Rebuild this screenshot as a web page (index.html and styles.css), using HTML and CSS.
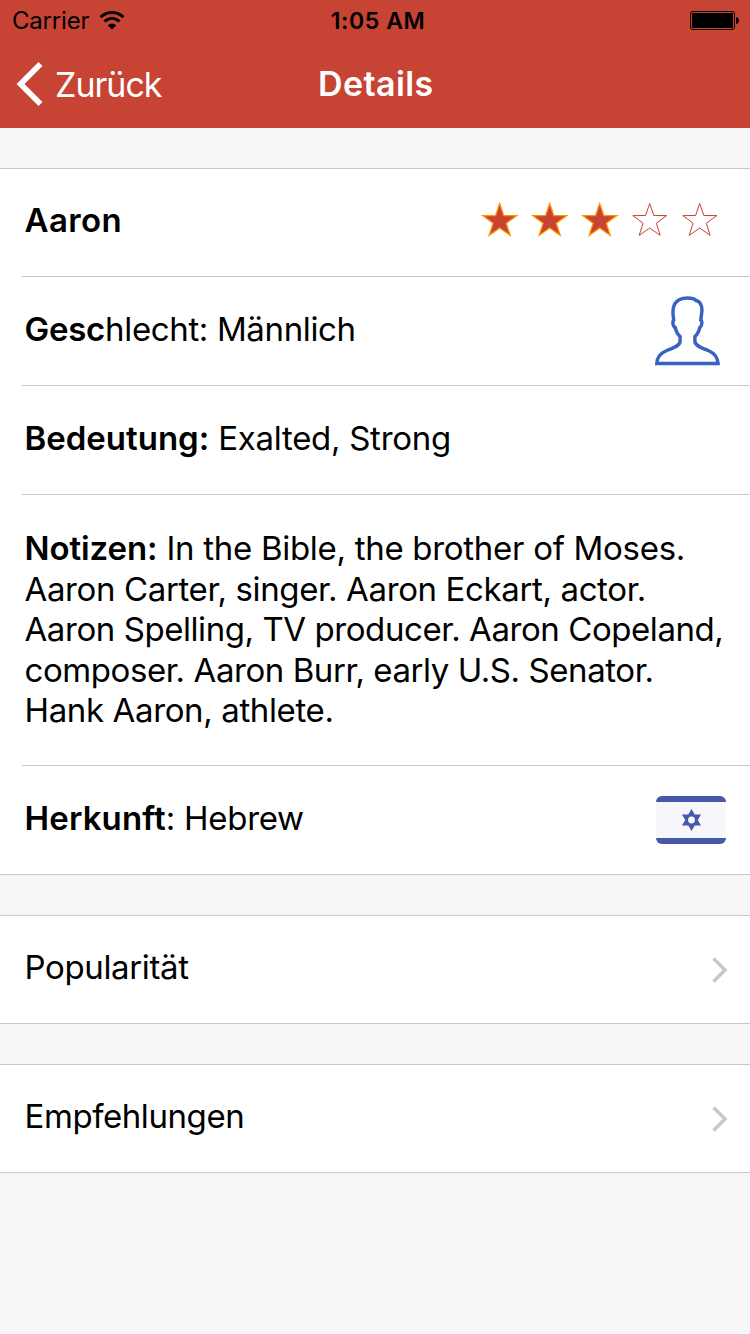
FILE: index.html
```html
<!DOCTYPE html>
<html lang="de">
<head>
<meta charset="utf-8">
<title>Details</title>
<link rel="stylesheet" href="styles.css">
</head>
<body>
<header class="header">
  <div class="status">
    <div class="status-left">
      <span class="carrier">Carrier</span>
      <svg class="wifi" width="26" height="20" viewBox="0 0 26 20">
        <path d="M1.600 6.200A16 16 0 0 1 24.400 6.200" fill="none" stroke="#000" stroke-width="2.900"/>
        <path d="M5.500 10.500A10.600 10.600 0 0 1 20.500 10.500" fill="none" stroke="#000" stroke-width="2.800"/>
        <path d="M13 18.600L8.800 14.300A6 6 0 0 1 17.200 14.300Z"/>
      </svg>
    </div>
    <span class="clock">1:05 AM</span>
    <svg class="battery" width="50" height="20" viewBox="0 0 50 20">
      <rect x=".5" y=".5" width="44" height="18" rx="2.5" fill="none" stroke="#000"/>
      <rect x="2" y="2" width="41" height="15" rx="1"/>
      <path d="M46 6q3 .5 3 3.500t-3 3.500z"/>
    </svg>
  </div>
  <nav class="nav">
    <div class="back">
      <svg class="back-icon" width="28" height="44" viewBox="0 0 28 44"><path d="M24.500 2L4.500 22L24.500 42" fill="none" stroke="#fff" stroke-width="5.600"/></svg>
      <span class="back-label">Zurück</span>
    </div>
    <h1 class="title">Details</h1>
  </nav>
</header>
<main>
  <section class="group">
    <div class="row first">
      <span class="text name"><b>Aaron</b></span>
      <svg class="stars" width="240" height="36" viewBox="0 0 240 36">
        <defs><path id="star" d="M19.700 1.500L23.800 13.500L36.800 13.600L26.300 21.200L30.200 33.400L19.700 26L9.200 33.400L13.100 21.200L2.800 13.600L15.600 13.500Z"/></defs>
        <g class="star-on"><use href="#star"/><use href="#star" x="50"/><use href="#star" x="100"/></g>
        <g class="star-off"><use href="#star" x="150"/><use href="#star" x="200"/></g>
      </svg>
    </div>
    <div class="row">
      <span class="text"><b class="gender-label">Gesc</b><span class="gender">hlecht: Männlich</span></span>
      <svg class="person" width="66" height="70" viewBox="0 0 67 70" preserveAspectRatio="none"><path d="M1.800 67.500C2 61 6 57 12 54.500C19 51.500 25.500 50 25.500 45V40.500C23 38.500 21.500 35.500 20.500 31.500C18 30.500 17.500 25 19 24C18 18 17.500 12 20 8C23 3 28 2 33 2C37 2 40 2.500 41.500 4.500C45 5 48.500 9 47.500 16L46.500 24C48.500 25 47.500 30.500 45.500 31.500C44.500 35.500 43 38.500 40.500 40.500V45C40.500 50 47 51.500 54 54.500C60 57 63.500 61 64 67.500Z"/></svg>
    </div>
    <div class="row">
      <span class="text"><b>Bedeutung:</b><span class="meaning"> Exalted, Strong</span></span>
    </div>
    <div class="row notes">
      <p class="text note-text"><b class="notes-label">Notizen:</b><span class="meaning"> In the Bible, the brother of Moses.</span><br>
      Aaron Carter, singer. Aaron Eckart, actor.<br>
      <span class="tight">Aaron Spelling, TV producer. Aaron Copeland,</span><br>
      <span class="tight">composer. Aaron Burr, early U.S. Senator.</span><br>
      Hank Aaron, athlete.</p>
    </div>
    <div class="row last">
      <span class="text"><b class="origin-label">Herkunft</b><span class="origin">: Hebrew</span></span>
      <svg class="flag" width="70" height="48" viewBox="0 0 70 48">
        <rect width="70" height="48" rx="6" fill="#4957a9"/>
        <rect y="6" width="70" height="36" fill="#f5f7fb"/>
        <path d="M35.500 13L38.700 18.500H45L41.800 24L45 29.500H38.700L35.500 35L32.300 29.500H26L29.200 24L26 18.500H32.300Z" fill="#4957a9"/>
        <circle cx="35.500" cy="24" r="3.400" fill="#f5f7fb"/>
      </svg>
    </div>
  </section>
  <section class="group link">
    <span class="text link-text">Popularität</span>
    <svg class="chevron" width="18" height="28" viewBox="0 0 18 28"><path d="M2.500 2.500L14 14L2.500 25.500"/></svg>
  </section>
  <section class="group link">
    <span class="text link-text tight">Empfehlungen</span>
    <svg class="chevron" width="18" height="28" viewBox="0 0 18 28"><path d="M2.500 2.500L14 14L2.500 25.500"/></svg>
  </section>
</main>
</body>
</html>
```
FILE: styles.css
```css
* { box-sizing: border-box; }
body { margin: 0; min-height: 1334px; background: #f7f7f7; color: #000; font-family: Inter, "Noto Sans", sans-serif; }
svg { display: block; flex: none; }

/* Status bar and navigation */
.header { height: 128px; background: #c74333; }
.status { height: 40px; padding: 0 10px 0 12px; display: grid; grid-template-columns: 1fr auto 1fr; align-items: center; font-size: 24px; line-height: 38px; }
.status-left { display: flex; align-items: center; gap: 10px; }
.carrier { padding-top: 2px; letter-spacing: -.2px; }
.wifi { margin-top: 2px; }
.clock { padding-top: 2px; font-weight: 600; font-size: 23px; letter-spacing: .6px; margin-left: 4px; }
.battery { justify-self: end; margin-top: 2px; }
.nav { height: 88px; padding: 0 0 0 16px; display: grid; grid-template-columns: 302px auto; justify-content: start; align-items: center; color: #fff; font-size: 34px; line-height: 86px; }
.back { display: flex; align-items: center; gap: 11px; }
.back-icon { margin-top: -1px; }
.back-label { padding-top: 2px; letter-spacing: -1px; }
.title { margin: 0; font-size: 34px; font-weight: 600; letter-spacing: .4px; }

/* Grouped table */
.group { background: #fff; border-top: 1px solid #c8c7cc; border-bottom: 1px solid #c8c7cc; margin-top: 40px; }
.row { height: 109px; margin-left: 22px; padding-left: 2.5px; border-bottom: 1px solid #c8c7cc; display: flex; align-items: center; justify-content: space-between; }
.row.first { height: 108px; padding-bottom: 6px; }
.row.last { height: 108px; border-bottom: 0; }
.row.notes { height: 271px; align-items: flex-start; padding-top: 33px; }
.text { font-size: 33px; line-height: 40px; white-space: nowrap; letter-spacing: -.37px; padding-bottom: 4px; }
.text b { font-weight: 600; letter-spacing: 0; }
.text.name b { letter-spacing: .4px; }
.name { padding-bottom: 0; }
.text .gender-label { letter-spacing: -.25px; }
.text .notes-label { letter-spacing: -.1px; }
.text .origin-label { letter-spacing: .15px; }
.tight, .text.tight { letter-spacing: -.43px; }
.gender { letter-spacing: -.36px; }
.meaning, .origin { letter-spacing: -.29px; }
.note-text { margin: 0; line-height: 40.5px; }
.stars { margin-right: 30px; }
.star-on { fill: #c74333; stroke: #ff9500; stroke-width: 1.3; }
.star-off { fill: #fff; stroke: #c74333; stroke-width: 1; }
.person { margin-right: 29px; fill: none; stroke: #3764c3; stroke-width: 3.5; }
.flag { margin-right: 24px; }
.link { height: 109px; padding: 0 21px 0 24.5px; display: flex; align-items: center; justify-content: space-between; }
.link-text { padding-bottom: 5px; }
.chevron { fill: none; stroke: #c7c7cc; stroke-width: 3.5; }
```
